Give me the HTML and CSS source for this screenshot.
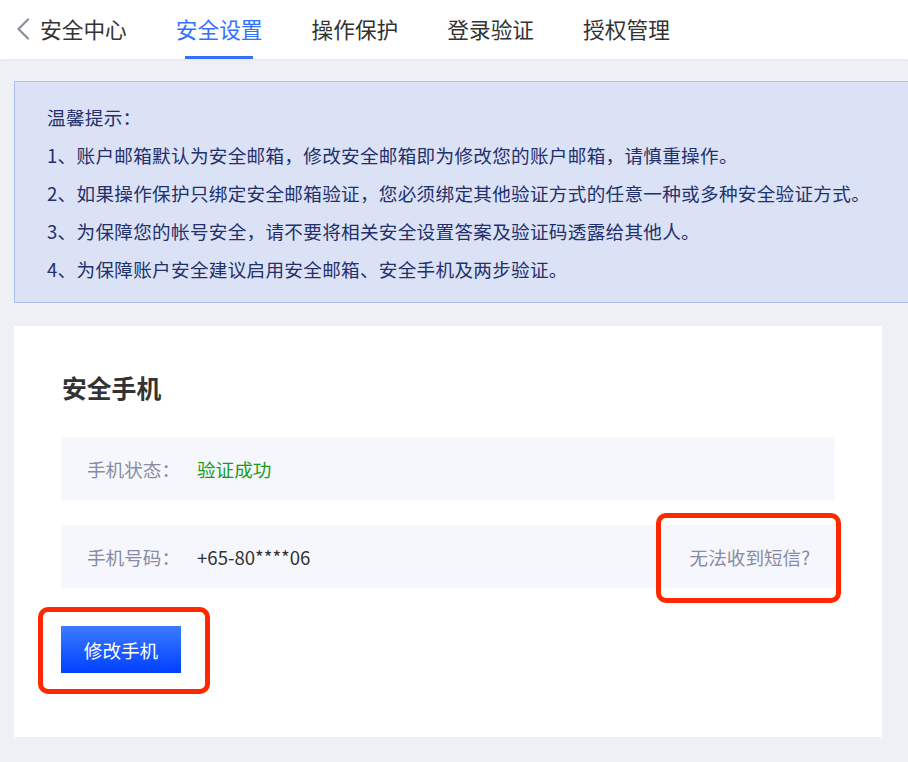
FILE: index.html
```html
<!DOCTYPE html>
<html lang="zh-CN">
<head>
<meta charset="utf-8">
<title>安全设置</title>
<link rel="stylesheet" href="styles.css">
</head>
<body>
<header class="topbar">
  <a class="tab back">
    <svg class="chev" width="14" height="22" viewBox="0 0 14 22"><path d="M12 1.5 L2.5 11 L12 20.5" fill="none" stroke="#8a8f9c" stroke-width="2.2" stroke-linecap="round" stroke-linejoin="round"/></svg>
    <span>安全中心</span>
  </a>
  <a class="tab active">安全设置</a>
  <a class="tab">操作保护</a>
  <a class="tab">登录验证</a>
  <a class="tab">授权管理</a>
</header>

<main class="content">
  <section class="notice">
    <p>温馨提示：</p>
    <p>1、账户邮箱默认为安全邮箱，修改安全邮箱即为修改您的账户邮箱，请慎重操作。</p>
    <p>2、如果操作保护只绑定安全邮箱验证，您必须绑定其他验证方式的任意一种或多种安全验证方式。</p>
    <p>3、为保障您的帐号安全，请不要将相关安全设置答案及验证码透露给其他人。</p>
    <p>4、为保障账户安全建议启用安全邮箱、安全手机及两步验证。</p>
  </section>

  <section class="card">
    <h2 class="card-title">安全手机</h2>
    <div class="rows">
      <div class="row">
        <span class="label">手机状态：</span>
        <span class="value ok">验证成功</span>
      </div>
      <div class="row">
        <span class="label">手机号码：</span>
        <span class="value">+65-80****06</span>
        <a class="sms-link">无法收到短信?<span class="mark mark-link"></span></a>
      </div>
    </div>
    <div class="actions">
      <button class="btn-primary">修改手机<span class="mark mark-btn"></span></button>
    </div>
  </section>
</main>
</body>
</html>
```

FILE: styles.css
```css
* { box-sizing: border-box; }

html, body {
  margin: 0;
  padding: 0;
}

body {
  background: #eef0f5;
  font-family: "Noto Sans CJK SC", "Noto Sans", "Liberation Sans", sans-serif;
  color: #333;
  width: 908px;
  height: 762px;
  overflow: hidden;
}

.topbar {
  height: 59px;
  background: #fff;
  display: flex;
  align-items: center;
  gap: 49px;
  padding-left: 16px;
  box-shadow: 0 1px 2px rgba(0, 0, 0, 0.04);
}

.tab {
  position: relative;
  height: 59px;
  display: flex;
  align-items: center;
  font-size: 21.7px;
  color: #333;
  white-space: nowrap;
  padding-bottom: 2px;
}

.back {
  gap: 10px;
}

.chev {
  display: block;
}

.tab.active {
  color: #3370ff;
}

.tab.active::after {
  content: "";
  position: absolute;
  left: 50%;
  bottom: 0;
  width: 68px;
  margin-left: -34px;
  height: 3px;
  background: #3370ff;
}

.content {
  padding: 22px 0 0 14px;
}

.notice {
  background: #dce2f5;
  border: 1px solid #aabff6;
  border-right: none;
  padding: 16px 0 14px 32px;
  color: #22306c;
  font-size: 18.6px;
  line-height: 38px;
  letter-spacing: 0.3px;
}

.notice p {
  margin: 0;
  white-space: nowrap;
}

.card {
  margin-top: 23px;
  width: 868px;
  background: #fff;
  padding: 44px 47px 64px 47px;
}

.card-title {
  margin: 0 0 0 1px;
  font-size: 24.8px;
  line-height: 34px;
  font-weight: 700;
  color: #333;
}

.rows {
  margin-top: 33px;
  display: flex;
  flex-direction: column;
  gap: 25px;
}

.row {
  position: relative;
  height: 63px;
  background: #f6f7fc;
  display: flex;
  align-items: center;
  padding: 0 25px 0 26px;
  font-size: 18.6px;
}

.label {
  width: 110px;
  color: #878ca6;
}

.value {
  color: #333;
}

.value.ok {
  color: #1a9c1a;
}

.sms-link {
  margin-left: auto;
  color: #878ca6;
  position: relative;
}

.actions {
  margin-top: 38px;
  display: flex;
}

.btn-primary {
  position: relative;
  width: 120px;
  height: 47px;
  border: none;
  border-radius: 0;
  background: linear-gradient(180deg, #3c7cff 0%, #0040ff 100%);
  color: #fff;
  font-family: inherit;
  font-size: 18.6px;
  padding: 0;
}

.mark {
  position: absolute;
  border: 5px solid #ff2800;
  border-radius: 10px;
  pointer-events: none;
}

.mark-link {
  left: -34px;
  right: -31px;
  top: -30px;
  bottom: -33px;
}

.mark-btn {
  left: -23px;
  right: -29px;
  top: -19px;
  bottom: -21px;
}
```
